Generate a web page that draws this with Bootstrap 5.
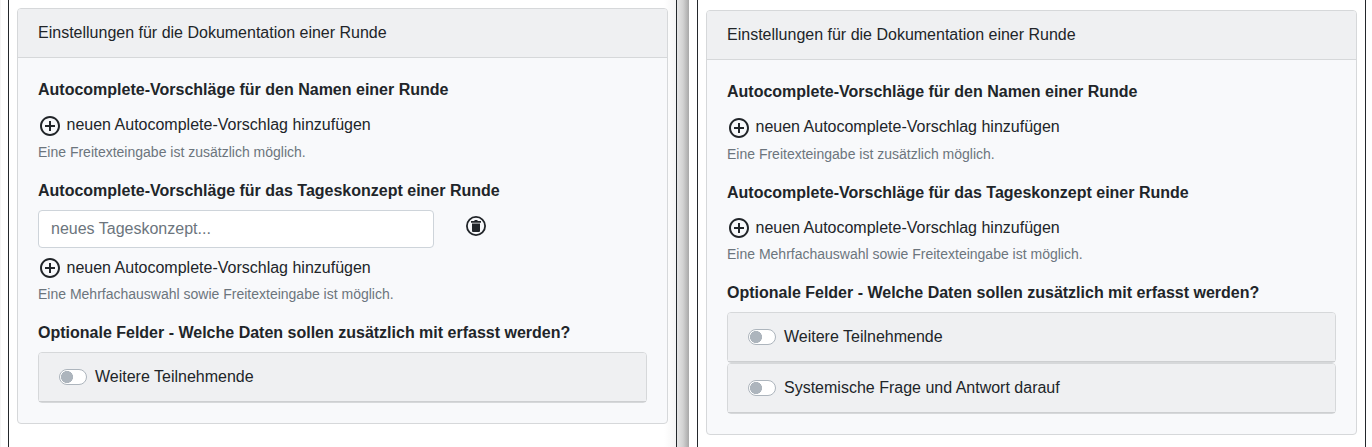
<!DOCTYPE html>
<html lang="de">
<head>
<meta charset="utf-8">
<title>Einstellungen</title>
<link href="https://cdn.jsdelivr.net/npm/bootstrap@5.3.0/dist/css/bootstrap.min.css" rel="stylesheet">
<style>
body{font-family:"Liberation Sans",Arial,sans-serif;color:#212529;background:#fff;height:447px;overflow:hidden}
.edge{width:8px;background:linear-gradient(90deg,#f5f5f5 1px,#fff 1px)}
.pane{border:solid #23272b;border-width:0 1px;height:447px;background:#fff}
.pane-a{width:669px;padding:8px 8px 0;background:linear-gradient(90deg,#fff 655px,#f5f5f5)}
.pane-b{width:669px;padding:10px 8px 0}
.shade{width:12px;background:linear-gradient(90deg,#e6e6e6,#d2d2d2 50%,#a8a8a8)}
.gap-strip{width:8px}
.card{--bs-card-border-color:#d6d8da;--bs-card-border-radius:4px;--bs-card-inner-border-radius:3px;--bs-card-cap-bg:#eff0f2;--bs-card-cap-padding-y:12px;--bs-card-cap-padding-x:20px;--bs-card-spacer-y:20px;--bs-card-spacer-x:20px;background:#f8f9fb}
.heading{font-weight:700;line-height:24px;height:24px}
.add-row{height:24px;line-height:24px;margin-top:12px}
.add-row svg{flex:none}
.add-row span{margin:-1px 0 1px 4.5px}
.add-row-after-field{margin-top:8px}
.add-row-tight{margin-top:11px}
.add-row-after-field span,.add-row-tight span{margin-top:0}
.field-row,.options{margin-top:7px}
.remove{margin:4px 0 0 30px;flex:none}
.hint{font-size:14px;line-height:21px;height:21px;color:#6c757d;margin:4px 0 16px}
.form-control{width:396px;height:38px;border-radius:4px;border-color:#ced4da}
.form-control::placeholder{color:#6c757d}
.switch{appearance:none;width:28px;height:16px;border:1px solid #adb5bd;border-radius:8px;margin:0 8px 0 0;background:radial-gradient(circle at 7px 7px,#adb5bd 5.7px,#fff 6.3px);background-origin:padding-box;flex:none}
.option .card-header{border-bottom-color:#cdcfd1}
</style>
<script src="https://cdn.jsdelivr.net/npm/bootstrap@5.3.0/dist/js/bootstrap.bundle.min.js"></script>
</head>
<body>
<svg class="d-none">
<symbol id="add" viewBox="0 0 24 24"><path d="M13 7h-2v4H7v2h4v4h2v-4h4v-2h-4V7zm-1-5C6.480 2 2 6.480 2 12s4.480 10 10 10 10-4.480 10-10S17.520 2 12 2zm0 18c-4.410 0-8-3.590-8-8s3.590-8 8-8 8 3.590 8 8-3.590 8-8 8z"/></symbol>
<symbol id="bin" viewBox="0 0 24 24"><circle cx="12" cy="12" r="9.100" fill="none" stroke="currentColor" stroke-width="1.800"/><path d="M7 7h3l1-1h2l1 1h3v1.700H7zM8 9.500h8V17q0 1-1 1H9q-1 0-1-1z"/></symbol>
</svg>
<div class="d-flex">
  <div class="edge"></div>
  <main class="pane pane-a">
    <section class="card">
      <div class="card-header">Einstellungen für die Dokumentation einer Runde</div>
      <div class="card-body">
        <div class="heading">Autocomplete-Vorschläge für den Namen einer Runde</div>
        <div class="add-row d-flex"><svg width="24" height="24" fill="currentColor"><use href="#add"/></svg><span>neuen Autocomplete-Vorschlag hinzufügen</span></div>
        <div class="hint">Eine Freitexteingabe ist zusätzlich möglich.</div>
        <div class="heading">Autocomplete-Vorschläge für das Tageskonzept einer Runde</div>
        <div class="field-row d-flex"><input class="form-control" placeholder="neues Tageskonzept..."><svg class="remove" width="24" height="24" fill="currentColor"><use href="#bin"/></svg></div>
        <div class="add-row add-row-after-field d-flex"><svg width="24" height="24" fill="currentColor"><use href="#add"/></svg><span>neuen Autocomplete-Vorschlag hinzufügen</span></div>
        <div class="hint">Eine Mehrfachauswahl sowie Freitexteingabe ist möglich.</div>
        <div class="heading">Optionale Felder - Welche Daten sollen zusätzlich mit erfasst werden?</div>
        <div class="options">
          <div class="card option"><label class="card-header d-flex align-items-center"><input type="checkbox" class="switch">Weitere Teilnehmende</label></div>
        </div>
      </div>
    </section>
  </main>
  <div class="shade"></div><div class="gap-strip"></div>
  <main class="pane pane-b">
    <section class="card">
      <div class="card-header">Einstellungen für die Dokumentation einer Runde</div>
      <div class="card-body">
        <div class="heading">Autocomplete-Vorschläge für den Namen einer Runde</div>
        <div class="add-row d-flex"><svg width="24" height="24" fill="currentColor"><use href="#add"/></svg><span>neuen Autocomplete-Vorschlag hinzufügen</span></div>
        <div class="hint">Eine Freitexteingabe ist zusätzlich möglich.</div>
        <div class="heading">Autocomplete-Vorschläge für das Tageskonzept einer Runde</div>
        <div class="add-row add-row-tight d-flex"><svg width="24" height="24" fill="currentColor"><use href="#add"/></svg><span>neuen Autocomplete-Vorschlag hinzufügen</span></div>
        <div class="hint">Eine Mehrfachauswahl sowie Freitexteingabe ist möglich.</div>
        <div class="heading">Optionale Felder - Welche Daten sollen zusätzlich mit erfasst werden?</div>
        <div class="options">
          <div class="card option"><label class="card-header d-flex align-items-center"><input type="checkbox" class="switch">Weitere Teilnehmende</label></div>
          <div class="card option"><label class="card-header d-flex align-items-center"><input type="checkbox" class="switch">Systemische Frage und Antwort darauf</label></div>
        </div>
      </div>
    </section>
  </main>
</div>
</body>
</html>
